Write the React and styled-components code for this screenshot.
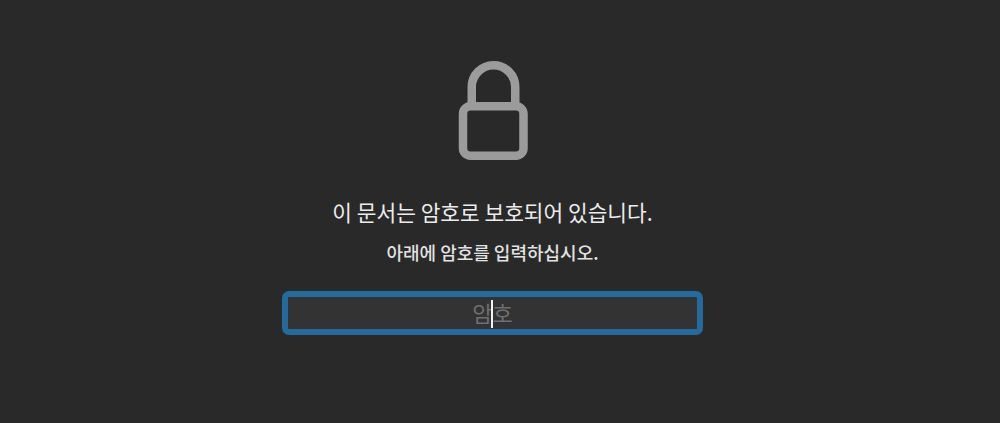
import React from 'react';
import styled, { createGlobalStyle } from 'styled-components';

const GlobalStyle = createGlobalStyle`
  html, body {
    margin: 0;
    padding: 0;
    background: #292929;
  }
`;

const Page = styled.div`
  box-sizing: border-box;
  width: 1000px;
  height: 423px;
  padding: 60px 15px 0 0;
  display: flex;
  flex-direction: column;
  align-items: center;
  background: #292929;
  font-family: "Noto Sans CJK KR", "Noto Sans", sans-serif;
  overflow: hidden;
`;

const LockIcon = styled.svg`
  display: block;
  width: 72px;
  height: 102px;
  color: #9b9b9b;
`;

const Title = styled.h1`
  margin: 34px 0 0;
  font-size: 21.4px;
  line-height: 32px;
  font-weight: 400;
  color: #ececec;
`;

const Subtitle = styled.p`
  margin: 11px 0 0;
  font-size: 18px;
  line-height: 26px;
  font-weight: 500;
  color: #e2e2e2;
`;

const PasswordField = styled.div`
  box-sizing: border-box;
  position: relative;
  width: 421px;
  height: 44px;
  margin-top: 26px;
  display: flex;
  align-items: center;
  justify-content: center;
  border: 6px solid #236b9c;
  border-radius: 7px;
  background: #333333;
`;

const Placeholder = styled.span`
  margin-top: -3px;
  font-size: 22px;
  line-height: 32px;
  color: #6f6f6f;
`;

const Caret = styled.span`
  position: absolute;
  left: 203px;
  top: 3px;
  width: 2px;
  height: 28px;
  background: #f2f2f2;
`;

export default function App() {
  return (
    <>
      <GlobalStyle />
      <Page>
        <LockIcon viewBox="0 0 72 102" fill="none" stroke="currentColor" strokeWidth="8.5">
          <path d="M14.75 44V27A21.75 21.75 0 0 1 58.25 27V44" />
          <rect x="6" y="46.25" width="60.5" height="49.5" rx="7.5" />
        </LockIcon>
        <Title>이 문서는 암호로 보호되어 있습니다.</Title>
        <Subtitle>아래에 암호를 입력하십시오.</Subtitle>
        <PasswordField>
          <Placeholder>암호</Placeholder>
          <Caret />
        </PasswordField>
      </Page>
    </>
  );
}
